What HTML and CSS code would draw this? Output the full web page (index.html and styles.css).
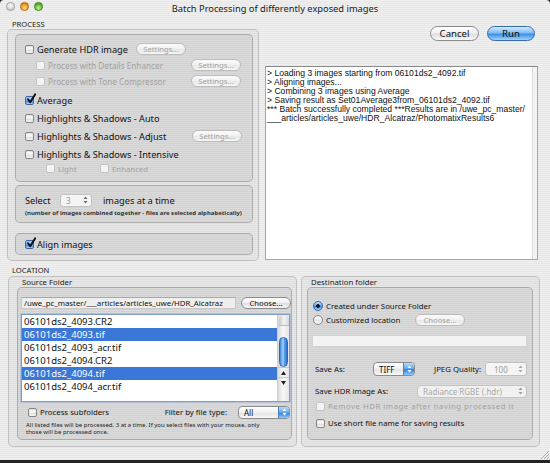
FILE: index.html
```html
<!DOCTYPE html>
<html lang="en">
<head>
  <meta charset="UTF-8">
  <title>Batch Processing of differently exposed images</title>
  <link rel="stylesheet" href="styles.css">
</head>
<body>
  <div class="window">
    <!-- title bar -->
    <div class="titlebar">
      <div class="lights">
        <span class="light close"></span>
        <span class="light min"></span>
        <span class="light zoom"></span>
      </div>
      <div class="title">Batch Processing of differently exposed images</div>
      <div></div>
    </div>

    <div class="top">
      <!-- process options -->
      <div class="process-col">
        <div class="section-label">PROCESS</div>
        <div class="group process-group">
          <div class="group inner options">
            <div class="row r16">
              <span class="check"></span><span class="label">Generate HDR image</span>
              <button class="btn small disabled first-settings">Settings...</button>
            </div>
            <div class="row r16 sub disabled-row">
              <span class="check disabled"></span><span class="label">Process with Details Enhancer</span>
              <button class="btn small disabled push">Settings...</button>
            </div>
            <div class="row r16 sub disabled-row">
              <span class="check disabled"></span><span class="label">Process with Tone Compressor</span>
              <button class="btn small disabled push">Settings...</button>
            </div>
            <div class="row r20">
              <span class="check checked"><svg class="tick" viewBox="0 0 10 10"><path d="M2 5.2 L4.2 8.2 L9.2 0.2" /></svg></span><span class="label">Average</span>
            </div>
            <div class="row">
              <span class="check"></span><span class="label">Highlights &amp; Shadows - Auto</span>
            </div>
            <div class="row">
              <span class="check"></span><span class="label">Highlights &amp; Shadows - Adjust</span>
              <button class="btn small disabled push adjust-settings">Settings...</button>
            </div>
            <div class="row">
              <span class="check"></span><span class="label">Highlights &amp; Shadows - Intensive</span>
            </div>
            <div class="row mini disabled-row">
              <span class="mini-item"><span class="check disabled"></span><span class="label">Light</span></span>
              <span class="check disabled"></span><span class="label">Enhanced</span>
            </div>
          </div>

          <div class="group inner select-box">
            <div class="select-row">
              <span class="select-word">Select</span>
              <span class="stepper">
                <span class="stepper-value">3</span>
                <svg class="arrows" width="5" height="8" viewBox="0 0 5 8"><path d="M2.5 0.5 L4.5 3 H0.5Z M2.5 7.5 L4.5 5 H0.5Z" /></svg>
              </span>
              <span class="select-after">images at a time</span>
            </div>
            <div class="hint">(number of images combined together - files are selected alphabetically)</div>
          </div>

          <div class="group inner align-box">
            <span class="check checked"><svg class="tick" viewBox="0 0 10 10"><path d="M2 5.2 L4.2 8.2 L9.2 0.2" /></svg></span><span class="label">Align images</span>
          </div>
        </div>
      </div>

      <!-- buttons and log -->
      <div class="right-col">
        <div class="actions">
          <button class="btn cancel">Cancel</button>
          <button class="btn run">Run</button>
        </div>
        <div class="log">
          <div class="log-text">
            <div>&gt; Loading 3 images starting from 06101ds2_4092.tif</div>
            <div>&gt; Aligning images...</div>
            <div>&gt; Combining 3 images using Average</div>
            <div>&gt; Saving result as Set01Average3from_06101ds2_4092.tif</div>
            <div>*** Batch successfully completed ***Results are in /uwe_pc_master/</div>
            <div>___articles/articles_uwe/HDR_Alcatraz/PhotomatixResults6</div>
          </div>
          <div class="log-track"></div>
        </div>
      </div>
    </div>

    <div class="section-label location-label">LOCATION</div>
    <div class="location">
      <!-- source -->
      <div class="group source">
        <div class="group-title">Source Folder</div>
        <div class="group inner source-inner">
          <div class="path-row">
            <div class="field path">/uwe_pc_master/___articles/articles_uwe/HDR_Alcatraz</div>
            <button class="btn small choose">Choose...</button>
          </div>
          <div class="file-list">
            <div class="files">
              <div class="file">06101ds2_4093.CR2</div>
              <div class="file selected">06101ds2_4093.tif</div>
              <div class="file">06101ds2_4093_acr.tif</div>
              <div class="file">06101ds2_4094.CR2</div>
              <div class="file selected">06101ds2_4094.tif</div>
              <div class="file">06101ds2_4094_acr.tif</div>
            </div>
            <div class="scrollbar">
              <span class="scroll-cap"></span>
              <span class="scroll-thumb"></span>
              <span class="scroll-arrow"><svg width="5" height="4" viewBox="0 0 5 4"><path d="M2.5 0 L5 4 H0Z" /></svg></span>
              <span class="scroll-arrow"><svg width="5" height="4" viewBox="0 0 5 4"><path d="M2.5 4 L5 0 H0Z" /></svg></span>
            </div>
          </div>
          <div class="under-row">
            <span class="check"></span><span class="label">Process subfolders</span>
            <span class="filter-label">Filter by file type:</span>
            <span class="popup filter">
              <span class="popup-label">All</span>
              <span class="popup-cap"><svg width="5" height="8" viewBox="0 0 5 8"><path d="M2.5 0.5 L4.5 3 H0.5Z M2.5 7.5 L4.5 5 H0.5Z" /></svg></span>
            </span>
          </div>
          <div class="note">All listed files will be processed, 3 at a time. If you select files with your mouse, only<br>those will be processed once.</div>
        </div>
      </div>

      <!-- destination -->
      <div class="group dest">
        <div class="group-title">Destination folder</div>
        <div class="group inner dest-inner">
          <div class="drow first-radio">
            <span class="radio on"></span><span class="label">Created under Source Folder</span>
          </div>
          <div class="drow">
            <span class="radio-item"><span class="radio"></span><span class="label">Customized location</span></span>
            <button class="btn small disabled dchoose">Choose...</button>
          </div>
          <div class="field dest-field"></div>
          <div class="drow save-row">
            <span class="dlabel save-label">Save As:</span>
            <span class="popup tiff">
              <span class="popup-label">TIFF</span>
              <span class="popup-cap"><svg width="5" height="8" viewBox="0 0 5 8"><path d="M2.5 0.5 L4.5 3 H0.5Z M2.5 7.5 L4.5 5 H0.5Z" /></svg></span>
            </span>
            <span class="dlabel jpeg-label">JPEG Quality:</span>
            <span class="stepper disabled quality">
              <span class="stepper-value">100</span>
              <svg class="arrows" width="5" height="8" viewBox="0 0 5 8"><path d="M2.5 0.5 L4.5 3 H0.5Z M2.5 7.5 L4.5 5 H0.5Z" /></svg>
            </span>
          </div>
          <div class="drow hdr-row">
            <span class="dlabel">Save HDR image As:</span>
            <span class="popup disabled hdr">
              <span class="popup-label">Radiance RGBE (.hdr)</span>
              <span class="popup-cap"><svg width="5" height="8" viewBox="0 0 5 8"><path d="M2.5 0.5 L4.5 3 H0.5Z M2.5 7.5 L4.5 5 H0.5Z" /></svg></span>
            </span>
          </div>
          <div class="drow check-row remove-row disabled-row">
            <span class="check disabled"></span><span class="label">Remove HDR image after having processed it</span>
          </div>
          <div class="drow check-row short-row">
            <span class="check"></span><span class="label">Use short file name for saving results</span>
          </div>
        </div>
      </div>
    </div>

    <svg class="grip" width="9" height="9" viewBox="0 0 9 9">
      <path d="M9 1 L1 9 M9 4 L4 9 M9 7 L7 9" stroke="#9a9a9a" stroke-width="0.8" />
    </svg>
  </div>
</body>
</html>
```

FILE: styles.css
```css
/* reset & base */
* {
  margin: 0;
  padding: 0;
  box-sizing: border-box;
}

body {
  background: #232323;
  height: 463px;
  overflow: hidden;
  font-family: "Noto Sans", "DejaVu Sans", sans-serif;
  color: #111;
}

button {
  font-family: inherit;
}

/* aqua window with pinstripes */
.window {
  position: relative;
  width: 550px;
  height: 460px;
  background: repeating-linear-gradient(#efefef 0 1px, #e7e7e7 1px 2px);
  border-radius: 4px 4px 0 0;
}

.titlebar {
  height: 17px;
  display: grid;
  grid-template-columns: 1fr auto 1fr;
  align-items: center;
}

.lights {
  display: flex;
  gap: 5.5px;
  padding-left: 6px;
  align-self: start;
  padding-top: 2px;
}

.light {
  width: 8.5px;
  height: 8.5px;
  border-radius: 50%;
}

.light.close {
  background: radial-gradient(circle at 50% 35%, #fdfdfd, #d4d4d4 65%, #a9a9a9);
  border: 1px solid #a3a3a3;
}

.light.min {
  background: radial-gradient(circle at 50% 72%, #ffe08a, #f59b1c 55%, #c26800);
  border: 1px solid #b56a10;
}

.light.zoom {
  background: radial-gradient(circle at 50% 72%, #c6f59a, #5fc02e 55%, #2d8510);
  border: 1px solid #3a8a1c;
}

.title {
  font-size: 9.3px;
  line-height: 17px;
  color: #1a1a1a;
}

/* group boxes */
.group {
  border: 1px solid rgba(0, 0, 0, 0.16);
  border-radius: 5px;
  background: rgba(0, 0, 0, 0.03);
}

.group.inner {
  border-color: rgba(0, 0, 0, 0.2);
  background: rgba(0, 0, 0, 0.055);
}

.section-label {
  height: 10px;
  line-height: 10px;
  font-size: 7.6px;
  padding-left: 12px;
  color: #222;
}

/* top half */
.top {
  display: grid;
  grid-template-columns: 259px 273px;
  column-gap: 6px;
  height: 244px;
}

.process-col .section-label {
  margin-top: 2px;
}

.process-group {
  margin-left: 7px;
  height: 232px;
  padding: 4px 5px 0 7px;
}

.options {
  height: 148px;
  padding: 6px 0 0 9px;
}

.row {
  display: flex;
  align-items: center;
  height: 18px;
  font-size: 9.2px;
}

.row.r16 {
  height: 16px;
}

.row.r20 {
  height: 20px;
  padding-top: 2px;
}

.row.sub {
  padding-left: 11px;
  font-size: 8.2px;
}

.row.mini {
  height: 11px;
  padding-left: 21px;
  font-size: 7.8px;
}

.mini-item {
  display: flex;
  align-items: center;
  width: 54px;
}

.label {
  margin-left: 3px;
  white-space: nowrap;
}

.disabled-row .label {
  color: #a2a2a2;
}

.first-settings {
  margin-left: auto;
  margin-right: 66px;
}

.push {
  margin-left: auto;
  margin-right: 11px;
}

.adjust-settings {
  margin-right: 10px;
}

/* checkboxes & radios */
.check {
  position: relative;
  flex: none;
  width: 9px;
  height: 9px;
  border: 1px solid #868686;
  border-radius: 2px;
  background: linear-gradient(#ffffff, #f0f0f0 50%, #dcdcdc 55%, #f6f6f6);
  box-shadow: inset 0 1px 1px rgba(0, 0, 0, 0.12);
}

.check.disabled {
  border-color: #c4c4c4;
  background: #f3f3f3;
  box-shadow: none;
}

.check.checked {
  border-color: #3d68a6;
  background: linear-gradient(#c5e0fb, #6aa9ee 50%, #3c86dd 55%, #9fd0ff);
}

.tick {
  position: absolute;
  left: 0;
  top: -3px;
  width: 10px;
  height: 10px;
  overflow: visible;
}

.tick path {
  fill: none;
  stroke: #0d0d0d;
  stroke-width: 1.9;
  stroke-linecap: round;
  stroke-linejoin: round;
}

.radio {
  flex: none;
  width: 10px;
  height: 10px;
  border-radius: 50%;
  border: 1px solid #8a8a8a;
  background: linear-gradient(#ffffff, #e8e8e8 55%, #f7f7f7);
}

.radio.on {
  border-color: #3d68a6;
  background: radial-gradient(circle, #101a2c 0 1.6px, transparent 2px), linear-gradient(#c5e0fb, #5c9ee9 50%, #3c86dd 55%, #a4d3ff);
}

/* aqua buttons */
.btn {
  display: flex;
  align-items: center;
  justify-content: center;
  flex: none;
  border: 1px solid #8c8c8c;
  border-radius: 8px;
  background: linear-gradient(#ffffff, #f1f1f1 45%, #dedede 55%, #f7f7f7);
  color: #111;
}

.btn.small {
  width: 50px;
  height: 12px;
  font-size: 7.7px;
}

.btn.disabled {
  border-color: #bcbcbc;
  color: #a5a5a5;
  background: linear-gradient(#fbfbfb, #f1f1f1 50%, #e8e8e8 55%, #f6f6f6);
}

.actions {
  display: flex;
  justify-content: flex-end;
  gap: 8px;
  margin-top: 9px;
  padding-right: 3px;
}

.actions .btn {
  height: 15px;
  font-size: 9.6px;
}

.cancel {
  width: 49px;
}

.run {
  width: 48px;
  border-color: #3a6aa8;
  background: linear-gradient(#d2ebff, #7dbdf5 45%, #3d8ee6 55%, #9fd4ff);
}

/* log box */
.log {
  display: flex;
  margin-top: 25px;
  height: 194px;
  background: #fff;
  border: 1px solid #a5a5a5;
  border-top-color: #8a8a8a;
}

.log-text {
  flex: 1;
  padding: 2px 0 0 1px;
  font-family: "Liberation Sans", Arial, sans-serif;
  font-size: 8.6px;
  line-height: 9.1px;
  color: #111;
  white-space: nowrap;
  overflow: hidden;
}

.log-track {
  width: 5px;
  background: #f3f3f3;
  border-left: 1px solid #dcdcdc;
}

/* select box */
.select-box {
  height: 38px;
  margin-top: 3px;
  padding: 6px 0 0 9px;
}

.select-row {
  display: flex;
  align-items: center;
  height: 16px;
  font-size: 9.2px;
}

.select-word {
  width: 35px;
}

.stepper {
  display: flex;
  align-items: center;
  justify-content: space-between;
  width: 32px;
  height: 13px;
  padding: 0 3px 0 5px;
  border: 1px solid #c2c2c2;
  border-radius: 3px;
  background: #f4f4f4;
  font-size: 8px;
  color: #9a9a9a;
}

.arrows path {
  fill: #6a6a6a;
}

.stepper.disabled .arrows path {
  fill: #a8a8a8;
}

.select-after {
  margin-left: 11px;
}

.hint {
  margin-top: 2px;
  font-size: 6px;
  line-height: 7px;
  font-weight: bold;
  color: #333;
  white-space: nowrap;
}

.align-box {
  display: flex;
  align-items: center;
  height: 22px;
  margin-top: 10px;
  padding-left: 9px;
  font-size: 9.2px;
}

/* location */
.location-label {
  margin-top: 4px;
}

.location {
  display: flex;
  gap: 4px;
  margin: 1px 0 0 8px;
  height: 171px;
}

.group-title {
  height: 10px;
  line-height: 10px;
  font-size: 7.8px;
  color: #222;
}

.source {
  width: 289px;
  padding: 0 4px 6px 8px;
}

.source .group-title {
  padding-left: 5px;
}

.source-inner {
  height: 153px;
  padding: 8px 0 0 3px;
}

.path-row {
  display: flex;
  align-items: center;
  height: 13px;
}

.field {
  height: 12px;
  border: 1px solid #c8c8c8;
  border-top-color: #a8a8a8;
  background: #eeeeee;
}

.path {
  width: 215px;
  padding-left: 2px;
  font-size: 7.8px;
  line-height: 10px;
  white-space: nowrap;
  overflow: hidden;
}

.choose {
  margin-left: 5px;
  height: 13px;
  font-size: 8px;
}

.file-list {
  display: flex;
  margin-top: 5px;
  width: 269px;
  height: 88px;
  border: 1px solid #7d9ccc;
  box-shadow: 0 0 0 1px rgba(120, 160, 220, 0.35);
  background: #fff;
}

.files {
  flex: 1;
}

.file {
  height: 13px;
  line-height: 13px;
  padding-left: 2px;
  font-size: 9.5px;
}

.file.selected {
  background: #3a77d6;
  color: #fff;
}

.scrollbar {
  display: flex;
  flex-direction: column;
  align-items: center;
  width: 12px;
  background: linear-gradient(90deg, #dadada, #f8f8f8 45%, #e6e6e6);
  border-left: 1px solid #cfcfcf;
}

.scroll-cap {
  width: 10px;
  height: 11px;
  border-radius: 5px 5px 0 0;
  background: linear-gradient(90deg, #c8c8c8, #f4f4f4 50%, #d6d6d6);
  border-bottom: 1px solid #bdbdbd;
}

.scroll-thumb {
  width: 9px;
  height: 30px;
  margin-top: 11px;
  border-radius: 5px;
  border: 1px solid #3064b2;
  background: linear-gradient(90deg, #3f83dc, #a9d6ff 45%, #5ba2ee 60%, #2f73d0);
}

.scroll-arrow {
  display: flex;
  align-items: center;
  justify-content: center;
  width: 11px;
  height: 10px;
  border-top: 1px solid #c9c9c9;
}

.scroll-arrow:first-of-type {
  margin-top: 2px;
}

.scroll-arrow path {
  fill: #222;
}

.under-row {
  display: flex;
  align-items: center;
  width: 269px;
  height: 14px;
  margin-top: 3px;
  padding-left: 7px;
  font-size: 7.8px;
}

.filter-label {
  margin-left: auto;
  margin-right: 11px;
}

.popup {
  display: flex;
  align-items: center;
  height: 13px;
  border: 1px solid #8c8c8c;
  border-radius: 4px;
  background: linear-gradient(#ffffff, #f0f0f0 50%, #e4e4e4 55%, #f8f8f8);
  overflow: hidden;
}

.popup-label {
  flex: 1;
  padding-left: 5px;
  font-size: 8px;
  white-space: nowrap;
}

.popup-cap {
  display: flex;
  align-items: center;
  justify-content: center;
  width: 11px;
  align-self: stretch;
  background: linear-gradient(#b4dbff, #5fa6ee 50%, #2f7fe0 55%, #8ecaff);
  border-left: 1px solid #4d7fbf;
}

.popup-cap path {
  fill: #fff;
}

.popup.filter {
  width: 52px;
}

.popup.disabled {
  border-color: #c4c4c4;
  background: #f1f1f1;
  color: #a8a8a8;
}

.popup.disabled .popup-cap {
  background: transparent;
  border-left: none;
}

.popup.disabled .popup-cap path {
  fill: #9c9c9c;
}

.note {
  margin-top: 3px;
  padding-left: 5px;
  font-size: 6px;
  line-height: 7px;
  color: #222;
  white-space: nowrap;
}

/* destination */
.dest {
  width: 239px;
  padding: 0 6px 6px 5px;
}

.dest .group-title {
  padding-left: 4px;
}

.dest-inner {
  height: 153px;
  padding-top: 10px;
  font-size: 7.8px;
}

.drow {
  display: flex;
  align-items: center;
  height: 14px;
  padding-left: 5px;
}

.first-radio {
  margin-top: 1px;
}

.radio-item {
  display: flex;
  align-items: center;
  width: 102px;
}

.dchoose {
  width: 51px;
}

.dest-field {
  width: 215px;
  margin: 8px 0 0 4px;
  background: #f3f3f3;
  border-color: #d2d2d2;
}

.save-row {
  margin-top: 15px;
  padding-left: 7px;
}

.save-label {
  width: 58px;
}

.popup.tiff {
  width: 42px;
  height: 14px;
}

.jpeg-label {
  width: 51px;
  margin-left: 19px;
}

.stepper.quality {
  width: 42px;
  height: 14px;
  padding-left: 8px;
}

.hdr-row {
  margin-top: 8px;
  padding-left: 7px;
}

.popup.hdr {
  width: 110px;
  margin-left: auto;
  margin-right: 5px;
}

.check-row {
  padding-left: 8px;
}

.remove-row {
  margin-top: 1px;
}

.remove-row .label {
  letter-spacing: 0.5px;
}

.short-row {
  margin-top: 3px;
}

.grip {
  position: absolute;
  right: 1px;
  bottom: 1px;
}
```
